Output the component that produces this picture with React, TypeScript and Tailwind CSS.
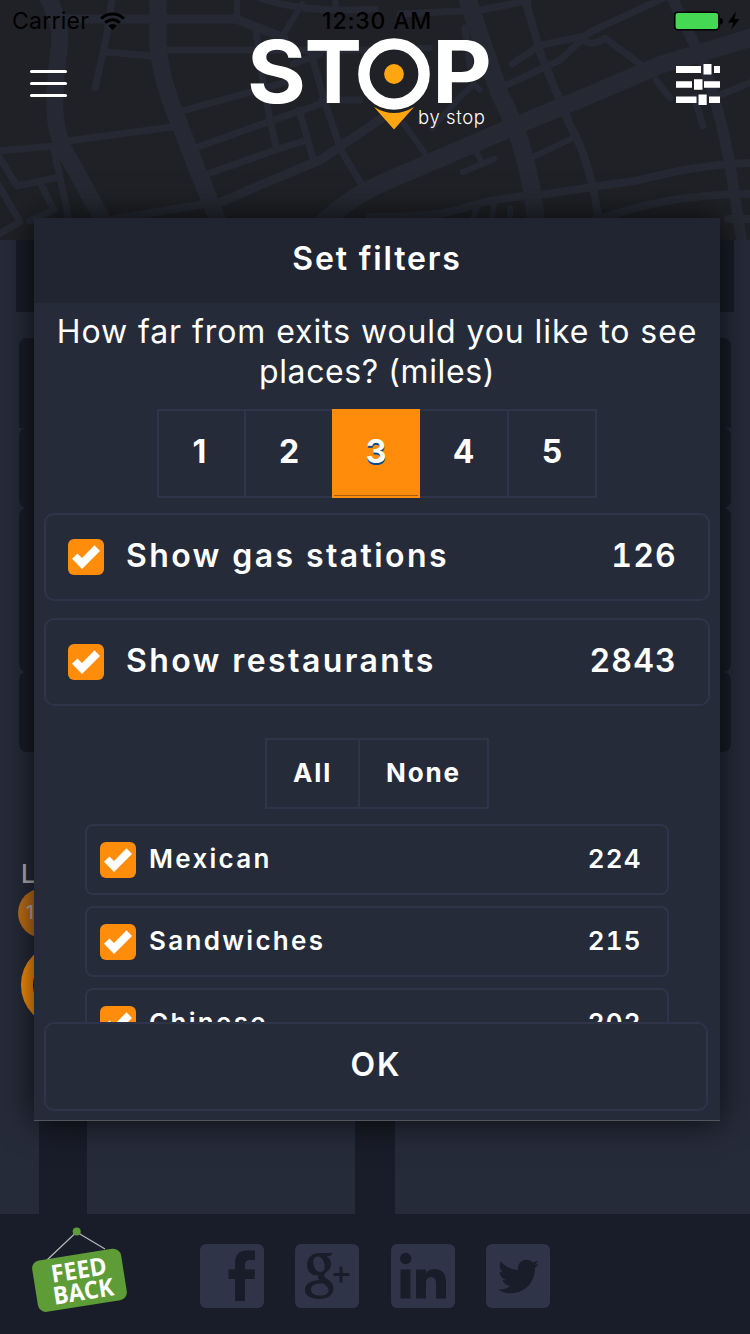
import type { ReactNode } from "react";
import { FaTwitter } from "react-icons/fa";

const roads: [number, string][] = [
  [17, "M46 -6Q60 18 60 42Q54 85 55 112Q57 142 70 160L106 226"],
  [7, "M-4 151L55 146M60 142L172 127M54 150L70 224"],
  [7, "M0 158L17 186L55 178M-2 184L20 222L-4 236M42 186L54 210L30 221"],
  [7, "M112 -2L106 40L95 88M107 52L152 56M165 50H375"],
  [17, "M158 -6V46Q161 80 178 120Q194 163 222 230"],
  [9, "M64 19H236L284 38"],
  [6, "M237 -2V19M335 -2L336 10M302 4L280 40"],
  [7, "M255 -4Q300 14 375 9"],
  [7, "M182 111L240 95L286 82M195 148L268 122L326 102M205 175L275 150L304 141"],
  [9, "M214 205L322 159L382 118"],
  [7, "M310 50L326 106L341 150L366 192M256 30L264 90L276 147M299 110L313 158M293 64L320 54M322 100H360"],
  [8, "M110 220L205 204"],
  [18, "M315 230Q345 200 380 184L515 126L590 95L660 65L760 35"],
  [18, "M465 -8L500 95Q530 150 537 230"],
  [8, "M524 -4L541 55L570 125Q592 165 599 224"],
  [7, "M400 14L480 10L528 1M465 28L470 66"],
  [11, "M670 -6L703 62Q720 110 730 165L742 244"],
  [7, "M668 -4L590 32L560 60L500 88M512 64L541 45L585 36"],
  [7, "M583 39Q590 48 605 38L648 70M656 80L670 98M694 97L703 126M720 95L752 82"],
  [6, "M535 156L573 138M404 124L426 155M463 172L494 159M475 149L482 163M432 128L460 97L474 84L480 90M398 48H430"],
  [8, "M370 217Q440 218 470 206Q500 197 540 195L640 180Q700 164 752 163"],
  [8, "M590 222Q670 193 752 194M728 219H752"],
  [6, "M478 204L472 222M494 204L491 222M510 208V222"],
];

function MapHeader() {
  return (
    <header className="relative h-60 shrink-0 overflow-hidden bg-[#202126]">
      <svg className="absolute inset-0" width="750" height="240" fill="none" stroke="#262933" strokeLinecap="round" strokeLinejoin="round">
        {roads.map(([w, d]) => (
          <path key={d} d={d} strokeWidth={w} />
        ))}
      </svg>
      <div className="relative flex h-10 items-center pt-0.5 text-[23px] leading-none text-black">
        <div className="flex w-[322px] items-center pl-3">
          <span className="tracking-[0.250px]">Carrier</span>
          <svg className="ml-[11px]" width="25" height="19" viewBox="0 0 25 19">
            <g fill="none" stroke="#000" strokeWidth="3.1">
              <path d="M1.2 6.6A16 16 0 0 1 23.8 6.6" />
              <path d="M5.2 10.7A10.4 10.4 0 0 1 19.8 10.7" />
            </g>
            <path d="M8.3 13.8a6 6 0 0 1 8.4 0L12.500 18Z" />
          </svg>
        </div>
        <span className="w-[352px] font-medium tracking-[0.850px]">12:30 AM</span>
        <svg width="68" height="20" viewBox="0 0 68 20">
          <rect x="0.8" y="1.300" width="44" height="17.500" rx="3" fill="#44d853" stroke="#000" strokeWidth="1.500" />
          <path d="M46 7q3 0 3 3.200T46 13.500Z" />
          <path d="M62 0.500L54 11.500H59.500L57 19L65.500 8H60.500Z" />
        </svg>
      </div>
      <div className="relative flex items-start pl-[30px] pr-[29px]">
        <div className="mt-[30px] flex w-[37px] flex-col gap-[9px]">
          <span className="h-[3px] rounded-sm bg-white" />
          <span className="h-[3px] rounded-sm bg-white" />
          <span className="h-[3px] rounded-sm bg-white" />
        </div>
        <svg className="-mt-1 ml-[178px] overflow-visible" width="250" height="100" viewBox="245 36 250 100" fontFamily="Inter, sans-serif">
          <g fill="#fff" fontWeight="700" fontSize="86">
            <text x="247" y="102.500" textLength="59" lengthAdjust="spacingAndGlyphs">S</text>
            <text x="304.500" y="102.500" textLength="57.500" lengthAdjust="spacingAndGlyphs">T</text>
            <text x="432" y="102.500" textLength="60" lengthAdjust="spacingAndGlyphs">P</text>
          </g>
          <circle cx="394" cy="74" r="30.100" fill="#202126" stroke="#fff" strokeWidth="11.400" />
          <circle cx="394" cy="74" r="9.900" fill="#ffa50f" />
          <path d="M374 107Q394 119 414 107L394 129.500Z" fill="#ffa50f" />
          <text x="418" y="124" fill="#fff" fontWeight="300" fontSize="18.500" textLength="67">by stop</text>
        </svg>
        <svg className="ml-auto mt-6" width="45" height="42" viewBox="676 64 45 42" fill="#fff">
          <path d="M676 66h25v7h-25zM714 66h6v7h-6zM703.500 64h8v10.500h-8z" />
          <path d="M676 81.200h16v6.500h-16zM704 81.200h16v6.500h-16zM694 79.300h8.500v10.400H694z" />
          <path d="M676 96.400h20.500v6.500H676zM709 96.400h11v6.500h-11zM698.500 94.500h8.200v10.500h-8.200z" />
        </svg>
      </div>
    </header>
  );
}

function Backdrop() {
  return (
    <main className="relative flex h-[974px] shrink-0 flex-col">
      <div className="mx-4 h-[72px] bg-[#191c29]" />
      <div className="mx-[19px] mt-[26px] flex flex-col">
        <div className="h-[90px] rounded-t-lg bg-[#191c29]" />
        <div className="h-20 rounded-lg bg-[#191c29]" />
        <div className="h-[164px] rounded-lg bg-[#191c29]" />
        <div className="h-20 rounded-lg bg-[#191c29]" />
      </div>
      <div className="ml-[21px] mt-[108px] text-[25px] font-medium leading-[28px] text-[#b5b6bb]">L</div>
      <div className="ml-[18px] flex h-[50px] w-[50px] items-center rounded-full bg-[#c37216] pl-2 text-[19px] font-medium text-[#b5b6bb]">10</div>
      <div className="ml-[21px] mt-[5px] h-[84px] w-[84px] rounded-full border-[12px] border-[#ff920c] bg-[#202126]" />
      <div className="mt-[11px] flex flex-1">
        <div className="w-[39px]" />
        <div className="w-12 bg-[#191c29]" />
        <div className="w-[268px]" />
        <div className="w-10 bg-[#191c29]" />
      </div>
    </main>
  );
}

function SocialTile({ children }: { children: ReactNode }) {
  return <div className="flex h-16 w-16 items-center justify-center rounded-[6px] bg-[#2f3448] text-[#191c29]">{children}</div>;
}

function Footer() {
  return (
    <footer className="flex h-[120px] shrink-0 bg-[#191c29]">
      <svg className="ml-7 mt-3 overflow-visible" width="104" height="92" viewBox="28 1226 104 92">
        <path d="M47 1260L76.500 1232L105 1249" fill="none" stroke="#b5b6ba" strokeWidth="1.300" />
        <circle cx="76.700" cy="1231.600" r="4" fill="#5e9c37" />
        <g transform="rotate(-9 79.500 1280.300)">
          <rect x="34.500" y="1254.300" width="90" height="52" rx="8" fill="#5e9c37" />
          <g fill="#fff" fontFamily="'Open Sans', sans-serif" fontWeight="700" fontSize="24.500">
            <text x="52.500" y="1278.500" textLength="56" lengthAdjust="spacingAndGlyphs">FEED</text>
            <text x="51" y="1300.500" textLength="61" lengthAdjust="spacingAndGlyphs">BACK</text>
          </g>
        </g>
      </svg>
      <div className="ml-[68px] mt-[30px] flex gap-[31.300px]">
        <SocialTile>
          <svg width="64" height="64" fill="currentColor">
            <path d="M35 57V35H28.500V25.500H35V19C35 11 39 6.500 47 6.500H55V16H50C46.500 16 45 17.500 45 20.500V25.500H55L54.500 35H45V57Z" />
          </svg>
        </SocialTile>
        <SocialTile>
          <svg width="64" height="64" fill="currentColor">
            <path fillRule="evenodd" d="M24 9H38L35 12H31.500C35 14 36 17 36 20C36 24 34 26.500 31 28.500C28.500 30.500 28.500 32 31 34C35 37 38.500 39.500 38.500 44.500C38.500 51 32.500 55 24 55C15.500 55 10 51.500 10 46C10 40 15.500 36.500 24.500 36C22.500 34 22.500 33 23.300 31.300C16 32 12 27 12 21.500C12 14 17 9 24 9ZM23 12.500C19.500 12.500 18 15.500 18.500 19C19 24 21.500 28 25.200 28C28.800 28 30 25 29.500 21C29 16.500 26.500 12.500 23 12.500ZM26 39.500C19.500 39.500 16 41.500 16 45.500C16 49.500 20 51.500 25.500 51.500C31 51.500 33.500 49.500 33.500 46C33.500 43 31 41.500 28.500 39.500Z" />
            <path d="M44.500 22.500H47.500V29H54.500V32H47.500V38.500H44.500V32H38.500V29H44.500Z" />
          </svg>
        </SocialTile>
        <SocialTile>
          <svg width="64" height="64" fill="currentColor">
            <circle cx="14.700" cy="14.500" r="5.700" />
            <path d="M9.500 25.500H19.500V54.500H9.500ZM25 25.500H35V29C37 26.300 40 25 43.500 25C51 25 55 29.500 55 38V54.500H45V39C45 35 43.500 33 40.500 33C37 33 35 35.500 35 39V54.500H25Z" />
          </svg>
        </SocialTile>
        <SocialTile>
          <FaTwitter className="ml-0.5 size-[41px]" />
        </SocialTile>
      </div>
    </footer>
  );
}

function Check() {
  return (
    <span className="flex size-9 shrink-0 items-center justify-center rounded-[6px] bg-[#ff8c0a]">
      <svg width="36" height="36" fill="#fff">
        <path d="M4 19.700L9.500 14.500L14 19L26.500 6.200L32 12L14 30Z" />
      </svg>
    </span>
  );
}

function ToggleRow({ label, count }: { label: string; count: string }) {
  return (
    <div className="flex h-[88px] items-center rounded-[10px] border-2 border-[#2f3448] pl-[22px] pr-[31px] text-[32px] font-semibold leading-none">
      <Check />
      <span className="-mt-0.5 ml-[22px] flex-1 tracking-[2.400px]">{label}</span>
      <span className="-mt-0.5 tabular-nums tracking-[1.200px]">{count}</span>
    </div>
  );
}

function CategoryRow({ label, count }: { label: string; count: string }) {
  return (
    <div className="flex h-[71px] shrink-0 items-center rounded-lg border-2 border-[#2f3448] pl-[13px] pr-[25px] text-[26px] font-semibold leading-none">
      <Check />
      <span className="-mt-0.5 ml-[13px] flex-1 tracking-[2.300px]">{label}</span>
      <span className="-mt-0.5 tabular-nums tracking-[1.300px]">{count}</span>
    </div>
  );
}

function FilterDialog() {
  return (
    <section className="absolute left-[34px] top-[218px] flex h-[903px] w-[686px] flex-col border-b border-[#55565d] bg-[#262b3a] text-white shadow-[0_0_32px_rgba(0,0,0,0.75)]">
      <h1 className="flex h-[85px] shrink-0 items-center justify-center bg-[#202531] pb-[3px] text-[32px] font-semibold tracking-[1.850px]">Set filters</h1>
      <p className="mt-[9px] shrink-0 whitespace-nowrap text-center text-[32px] leading-10">
        <span className="tracking-[0.920px]">How far from exits would you like to see</span>
        <br />
        <span className="tracking-[0.600px]">places? (miles)</span>
      </p>
      <div className="ml-[123px] mt-[17px] flex h-[89px] w-[440px] shrink-0 border-2 border-[#2f3448] text-[32px] font-bold">
        <span className="flex w-[87px] items-center justify-center border-r-2 border-[#2f3448] pb-[3px] pr-1">1</span>
        <span className="flex w-[86px] items-center justify-center pb-[3px]">2</span>
        <span className="-my-0.5 flex w-[88px] items-center justify-center border-2 border-[#ff8c0a] bg-[#ff8c0a] pb-[3px] shadow-[inset_0_-1px_0_#a85e10] [text-shadow:0_2px_0_#00498f]">3</span>
        <span className="flex w-[89px] items-center justify-center border-r-2 border-[#2f3448] pb-[3px]">4</span>
        <span className="flex flex-1 items-center justify-center pb-[3px]">5</span>
      </div>
      <div className="mx-2.5 mt-[15px] h-[89px] shrink-0">
        <ToggleRow label="Show gas stations" count="126" />
      </div>
      <div className="mx-2.5 mt-4 h-[88px] shrink-0">
        <ToggleRow label="Show restaurants" count="2843" />
      </div>
      <div className="ml-[231px] mt-8 flex h-[71px] w-56 shrink-0 border-2 border-[#2f3448] pb-0.5 text-[26px] font-bold tracking-[1.900px]">
        <span className="-mb-0.5 flex w-[93px] items-center justify-center border-r-2 border-[#2f3448] pb-0.5">All</span>
        <span className="flex flex-1 items-center justify-center">None</span>
      </div>
      <div className="ml-[51px] mt-[15px] flex h-[198px] w-[584px] shrink-0 flex-col gap-[11px] overflow-hidden">
        <CategoryRow label="Mexican" count="224" />
        <CategoryRow label="Sandwiches" count="215" />
        <CategoryRow label="Chinese" count="202" />
      </div>
      <button className="ml-2.5 flex h-[89px] w-[664px] shrink-0 items-center justify-center rounded-[10px] border-2 border-[#2f3448] pb-[3px] text-[32px] font-semibold tracking-[2px]">OK</button>
    </section>
  );
}

export default function App() {
  return (
    <div className="relative flex h-[1334px] w-[750px] flex-col overflow-hidden bg-[#262b3a] font-['Inter',sans-serif]">
      <MapHeader />
      <Backdrop />
      <Footer />
      <FilterDialog />
    </div>
  );
}
